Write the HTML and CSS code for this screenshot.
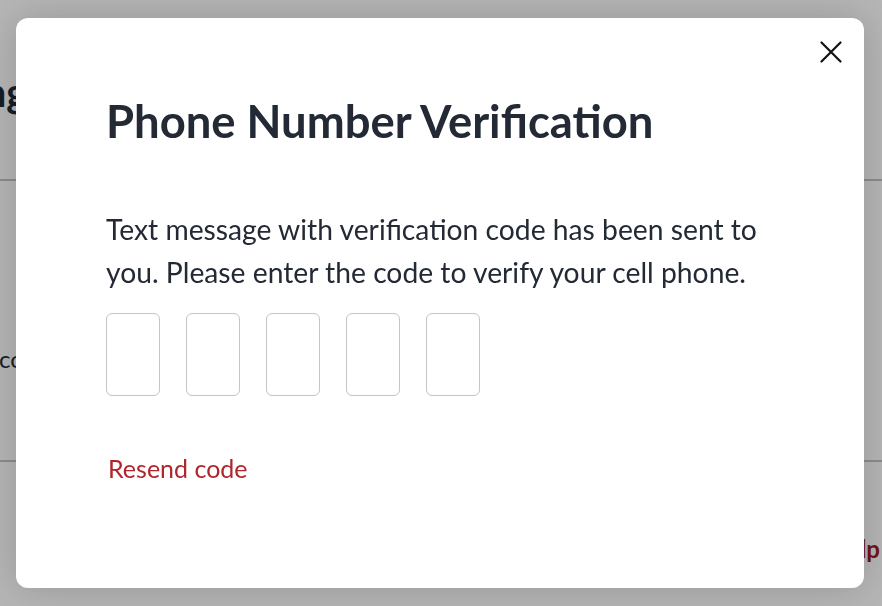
FILE: index.html
```html
<!DOCTYPE html>
<html>
<head>
<meta charset="utf-8">
<link rel="stylesheet" href="styles.css">
</head>
<body>
<div class="page">
  <h1 class="page-title">Settings</h1>
  <hr class="rule rule-top">
  <div class="row">
    <span class="row-label">Verification code</span>
  </div>
  <hr class="rule rule-bottom">
  <div class="footer-row"><a class="help">Help</a></div>
</div>
<div class="overlay">
  <div class="modal">
    <button class="close" aria-label="Close">
      <svg width="22" height="22" viewBox="0 0 22 22"><path d="M1.5 1.5 L20.5 20.5 M20.5 1.5 L1.5 20.5" stroke="#111" stroke-width="2.2" stroke-linecap="round" fill="none"/></svg>
    </button>
    <h2 class="title">Phone Number Verification</h2>
    <p class="desc">Text message with verification code has been sent to you. Please enter the code to verify your cell phone.</p>
    <div class="codes">
      <input class="code" maxlength="1">
      <input class="code" maxlength="1">
      <input class="code" maxlength="1">
      <input class="code" maxlength="1">
      <input class="code" maxlength="1">
    </div>
    <a class="resend">Resend code</a>
  </div>
</div>
</body>
</html>
```
FILE: styles.css
```css
html, body {
  margin: 0;
  padding: 0;
  background: #fff;
  font-family: Lato, "Open Sans", sans-serif;
  color: #232a35;
}
.page {
  width: 882px;
  height: 606px;
  overflow: hidden;
  position: relative;
}
.page-title {
  margin: 0;
  padding-top: 68px;
  margin-left: -98px;
  font-size: 40px;
  font-weight: 700;
  line-height: 48px;
  height: 64px;
  white-space: nowrap;
}
.rule {
  border: 0;
  border-top: 2px solid #c4c4c4;
  margin: 0;
}
.rule-top { margin-top: 47px; }
.row {
  height: 279px;
  box-sizing: border-box;
  padding-top: 160px;
}
.row-label {
  display: flex;
  justify-content: flex-end;
  width: 50px;
  font-size: 24px;
  line-height: 36px;
  white-space: nowrap;
}
.footer-row {
  display: flex;
  justify-content: flex-end;
  padding-top: 72px;
}
.help {
  color: #9e1b22;
  font-weight: 700;
  font-size: 24px;
  margin-right: 2px;
}
.overlay {
  position: fixed;
  inset: 0;
  background: rgba(0, 0, 0, 0.29);
  display: flex;
  align-items: center;
  justify-content: center;
  padding-right: 2px;
}
.modal {
  position: relative;
  width: 848px;
  height: 570px;
  box-sizing: border-box;
  background: #fff;
  border-radius: 12px;
  box-shadow: 0 0 40px rgba(0, 0, 0, 0.18);
  padding: 75px 90px 0 90px;
}
.close {
  position: absolute;
  top: 23px;
  right: 22px;
  width: 22px;
  height: 22px;
  padding: 0;
  border: 0;
  background: none;
  display: flex;
}
.title {
  margin: 0;
  font-size: 45.4px;
  font-weight: 700;
  line-height: 56px;
  color: #232a35;
}
.desc {
  margin: 59px 0 0 0;
  font-size: 28.25px;
  line-height: 43px;
  width: 670px;
  color: #232a35;
}
.codes {
  display: flex;
  gap: 26px;
  margin-top: 19px;
}
.code {
  width: 54px;
  height: 83px;
  box-sizing: border-box;
  border: 1px solid #c4c4c4;
  border-radius: 6px;
  padding: 0;
  margin: 0;
  background: #fff;
}
.resend {
  display: block;
  margin-top: 54px;
  margin-left: 2px;
  font-size: 25px;
  line-height: 36px;
  color: #b0242b;
}
```
